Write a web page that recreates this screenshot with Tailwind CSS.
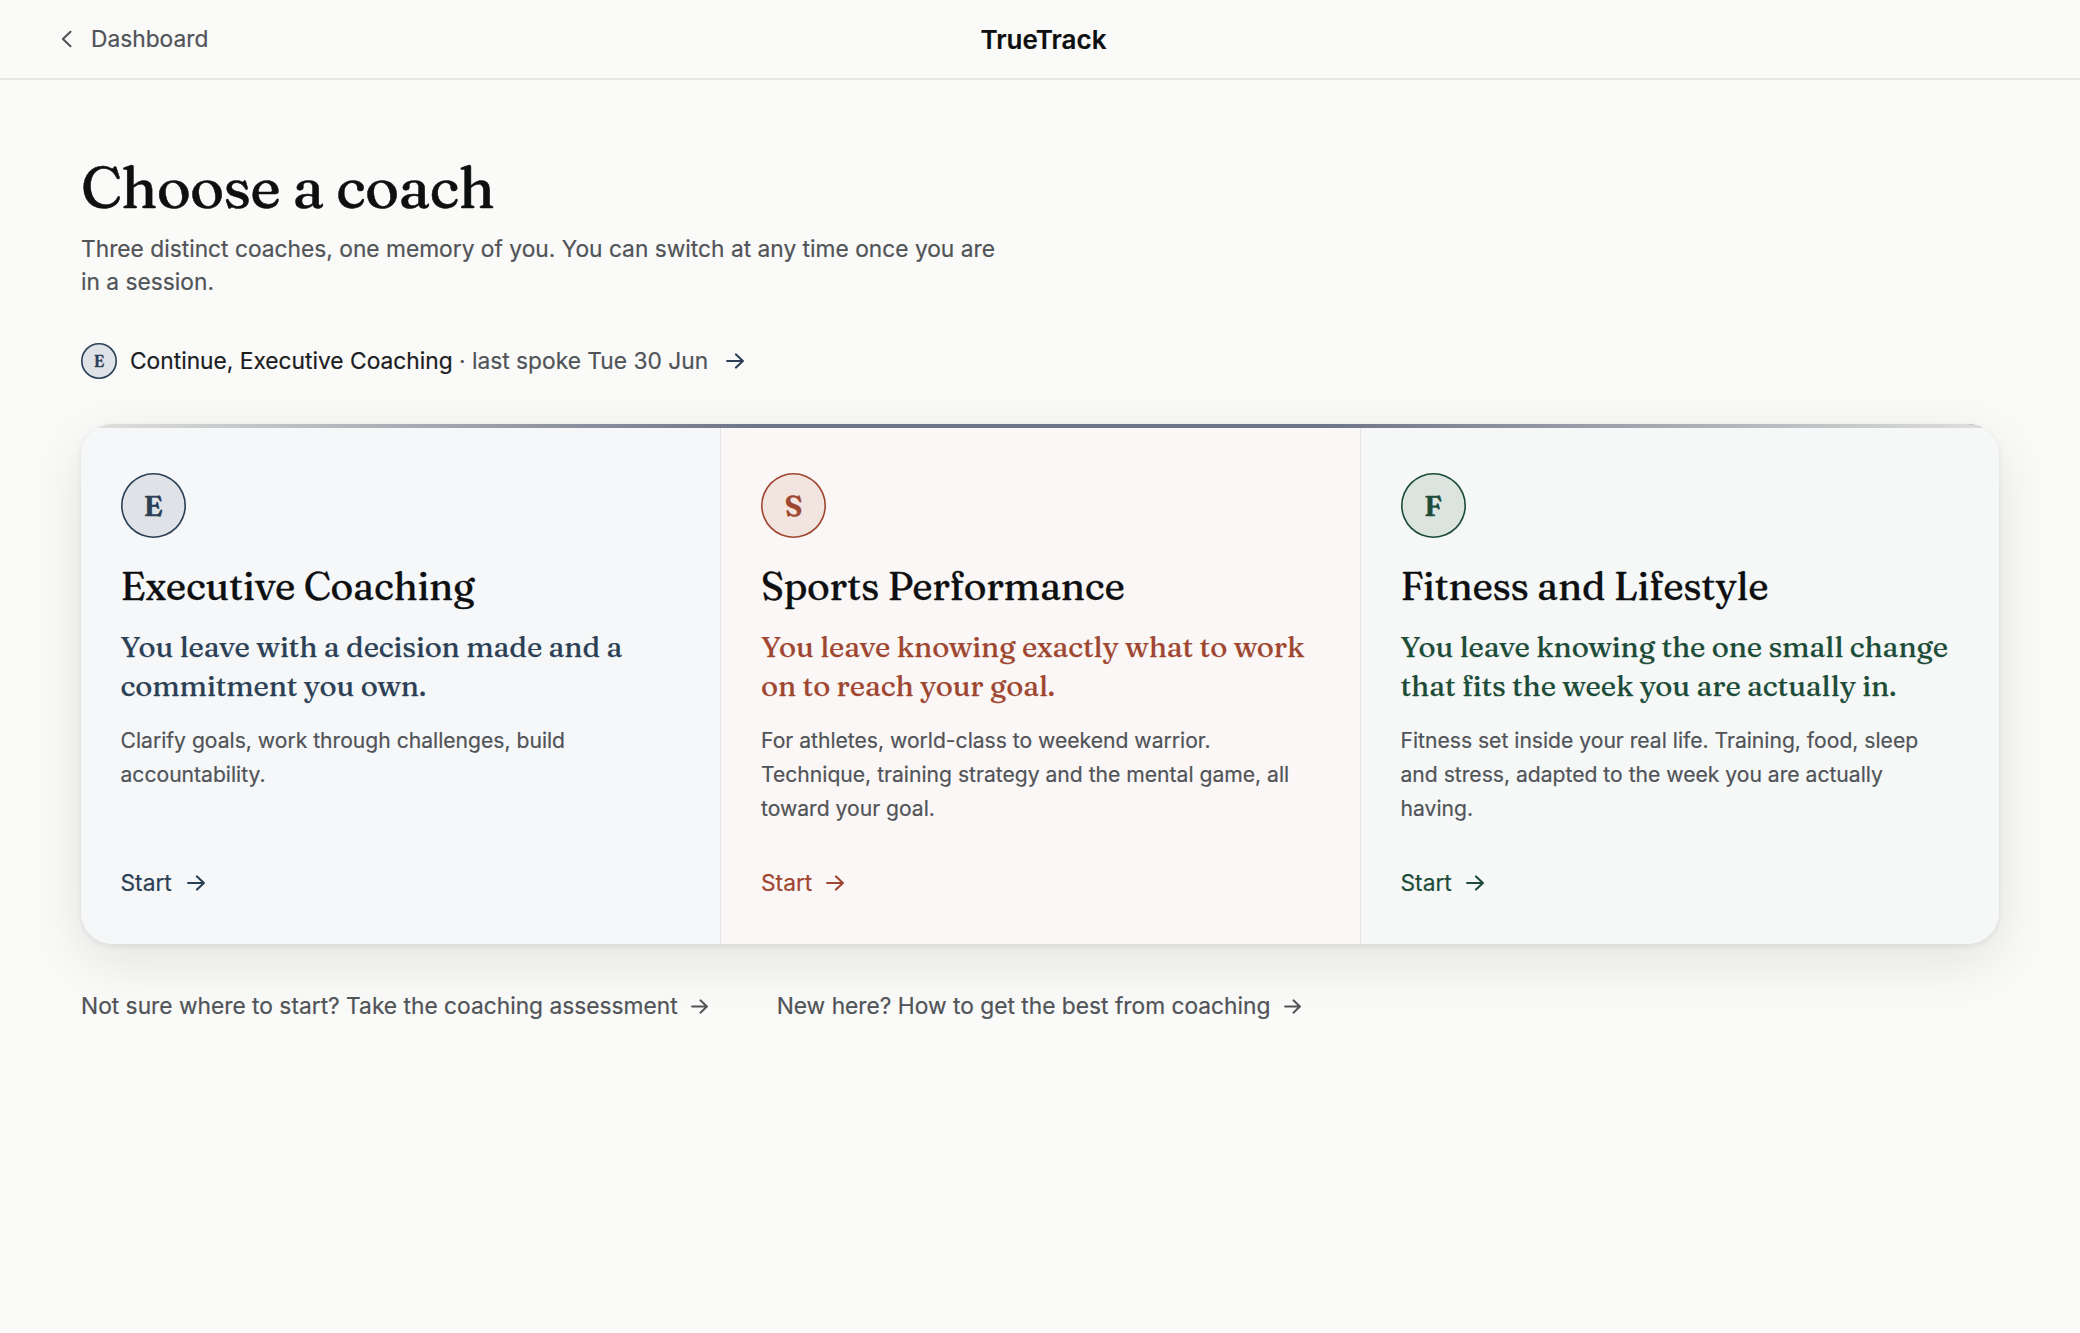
<!DOCTYPE html>
<html lang="en">
<head>
  <meta charset="UTF-8">
  <meta name="viewport" content="width=device-width, initial-scale=1.0">
  <title>TrueTrack - Choose a coach</title>
  <script src="https://cdn.jsdelivr.net/npm/@tailwindcss/browser@4"></script>
</head>
<body class="min-h-screen bg-[#fafaf8] font-['Inter',sans-serif] text-[22.76px] text-[#505357] [-webkit-text-stroke:0.2px]">

  <svg class="hidden">
    <symbol id="arrow" viewBox="0 0 18 16">
      <path d="M1.1 8H16.8M10 1.4L16.9 8L10 14.6" fill="none" stroke="currentColor" stroke-width="2.1" stroke-linecap="round" stroke-linejoin="round"/>
    </symbol>
  </svg>

  <!-- Top bar -->
  <header class="grid grid-cols-[1fr_auto_1fr] items-center h-20 border-b-2 border-[#e6e6e4] pl-[61px] pr-[54px]">
    <a href="#" class="flex items-center gap-[18px]">
      <svg class="w-3 h-[18px]" viewBox="0 0 12 18" fill="none" stroke="currentColor" stroke-width="2.1" stroke-linecap="round" stroke-linejoin="round">
        <path d="M9.5 1.8L1.9 9L9.5 16.2"/>
      </svg>
      <span>Dashboard</span>
    </a>
    <span class="text-[26px] font-semibold text-[#0e0f10]">TrueTrack</span>
  </header>

  <main class="pl-[81px] pr-[81px] pt-[75px]">
    <h1 class="font-['Fraunces','Liberation_Serif',serif] text-[58.4px] leading-16 tracking-[-0.013em] text-[#0e0f10] [-webkit-text-stroke:0.5px]">Choose a coach</h1>
    <p class="mt-[13px] w-[926px] leading-[33px]">Three distinct coaches, one memory of you. You can switch at any time once you are in a session.</p>

    <a href="#" class="mt-[45px] flex items-center">
      <span class="flex size-9 items-center justify-center rounded-full bg-[#dfe3e8] font-['Fraunces','Liberation_Serif',serif] text-base font-semibold text-[#2b4055] shadow-[inset_0_0_0_1.6px_#2b4055] [-webkit-text-stroke:0.3px]">E</span>
      <span class="ml-[13px] whitespace-nowrap leading-9"><span class="text-[#1b1d1f]">Continue, Executive Coaching</span> · last spoke Tue 30 Jun</span>
      <svg class="ml-[17.5px] h-4 w-[18px] text-[#2b4055]"><use href="#arrow"/></svg>
    </a>

    <!-- Coach cards -->
    <div class="mt-[45px] h-[520px] rounded-[32px] shadow-[0_2px_6px_rgba(20,20,20,0.08),0_18px_56px_rgba(20,20,20,0.10)]">
      <div class="relative grid h-full grid-cols-[640px_640px_1fr] overflow-hidden rounded-[32px]">
        <div class="absolute inset-x-0 top-0 h-1 bg-linear-to-r from-[#e2e2de] from-0% via-[#6f7588] via-35% to-[#6f7588] to-65%"></div>
        <div class="absolute right-0 top-0 h-1 w-[35%] bg-linear-to-r from-[#6f7588] to-[#e2e2de]"></div>

        <section class="flex flex-col items-start border-r border-[#e2e4e6] bg-[#f5f7f9] pl-[39.5px] pr-[38.5px] pt-[49px] pb-[44px] text-[#2b4055]">
          <span class="flex size-[65px] items-center justify-center rounded-full bg-[#dfe3e8] font-['Fraunces','Liberation_Serif',serif] text-[29px] font-semibold shadow-[inset_0_0_0_1.6px_#2b4055] [-webkit-text-stroke:0.4px]">E</span>
          <h2 class="mt-6 font-['Fraunces','Liberation_Serif',serif] text-[38.9px] leading-12 tracking-[-0.007em] text-[#0e0f10] [-webkit-text-stroke:0.3px]">Executive Coaching</h2>
          <p class="mt-[17px] font-['Fraunces','Liberation_Serif',serif] text-[29.2px] leading-[39px] tracking-[-0.004em] [-webkit-text-stroke:0.25px]">You leave with a decision made and a commitment you own.</p>
          <p class="mt-[19px] text-[21.12px] leading-[34.2px] text-[#505357]">Clarify goals, work through challenges, build accountability.</p>
          <a href="#" class="mt-auto flex items-center gap-[15px] leading-[34px]">Start <svg class="h-4 w-[18px]"><use href="#arrow"/></svg></a>
        </section>

        <section class="flex flex-col items-start border-r border-[#e6e5e4] bg-[#fbf7f6] pl-10 pr-[38px] pt-[49px] pb-[44px] text-[#9f4630]">
          <span class="flex size-[65px] items-center justify-center rounded-full bg-[#f2e4df] font-['Fraunces','Liberation_Serif',serif] text-[29px] font-semibold shadow-[inset_0_0_0_1.6px_#9f4630] [-webkit-text-stroke:0.4px]">S</span>
          <h2 class="mt-6 font-['Fraunces','Liberation_Serif',serif] text-[38.9px] leading-12 tracking-[-0.007em] text-[#0e0f10] [-webkit-text-stroke:0.3px]">Sports Performance</h2>
          <p class="mt-[17px] font-['Fraunces','Liberation_Serif',serif] text-[29.2px] leading-[39px] tracking-[-0.004em] [-webkit-text-stroke:0.25px]">You leave knowing exactly what to work on to reach your goal.</p>
          <p class="mt-[19px] text-[21.12px] leading-[34.2px] text-[#505357]">For athletes, world-class to weekend warrior. Technique, training strategy and the mental game, all toward your goal.</p>
          <a href="#" class="mt-auto flex items-center gap-[14px] leading-[34px]">Start <svg class="h-4 w-[18px]"><use href="#arrow"/></svg></a>
        </section>

        <section class="flex flex-col items-start bg-[#f5f8f7] pl-[39.5px] pr-[42px] pt-[49px] pb-[44px] text-[#1c4c38]">
          <span class="flex size-[65px] items-center justify-center rounded-full bg-[#dce4e0] font-['Fraunces','Liberation_Serif',serif] text-[29px] font-semibold shadow-[inset_0_0_0_1.6px_#1c4c38] [-webkit-text-stroke:0.4px]">F</span>
          <h2 class="mt-6 font-['Fraunces','Liberation_Serif',serif] text-[38.9px] leading-12 tracking-[-0.007em] text-[#0e0f10] [-webkit-text-stroke:0.3px]">Fitness and Lifestyle</h2>
          <p class="mt-[17px] font-['Fraunces','Liberation_Serif',serif] text-[29.2px] leading-[39px] tracking-[-0.004em] [-webkit-text-stroke:0.25px]">You leave knowing the one small change that fits the week you are actually in.</p>
          <p class="mt-[19px] text-[21.12px] leading-[34.2px] text-[#505357]">Fitness set inside your real life. Training, food, sleep and stress, adapted to the week you are actually having.</p>
          <a href="#" class="mt-auto flex items-center gap-[14px] leading-[34px]">Start <svg class="h-4 w-[18px]"><use href="#arrow"/></svg></a>
        </section>
      </div>
    </div>

    <!-- Secondary links -->
    <nav class="relative mt-[45px] flex gap-[69px] leading-[34px]">
      <a href="#" class="flex items-center gap-[13px]">Not sure where to start? Take the coaching assessment <svg class="h-[15px] w-[17px]"><use href="#arrow"/></svg></a>
      <a href="#" class="flex items-center gap-[14px]">New here? How to get the best from coaching <svg class="h-[15px] w-[17px]"><use href="#arrow"/></svg></a>
    </nav>
  </main>

</body>
</html>
